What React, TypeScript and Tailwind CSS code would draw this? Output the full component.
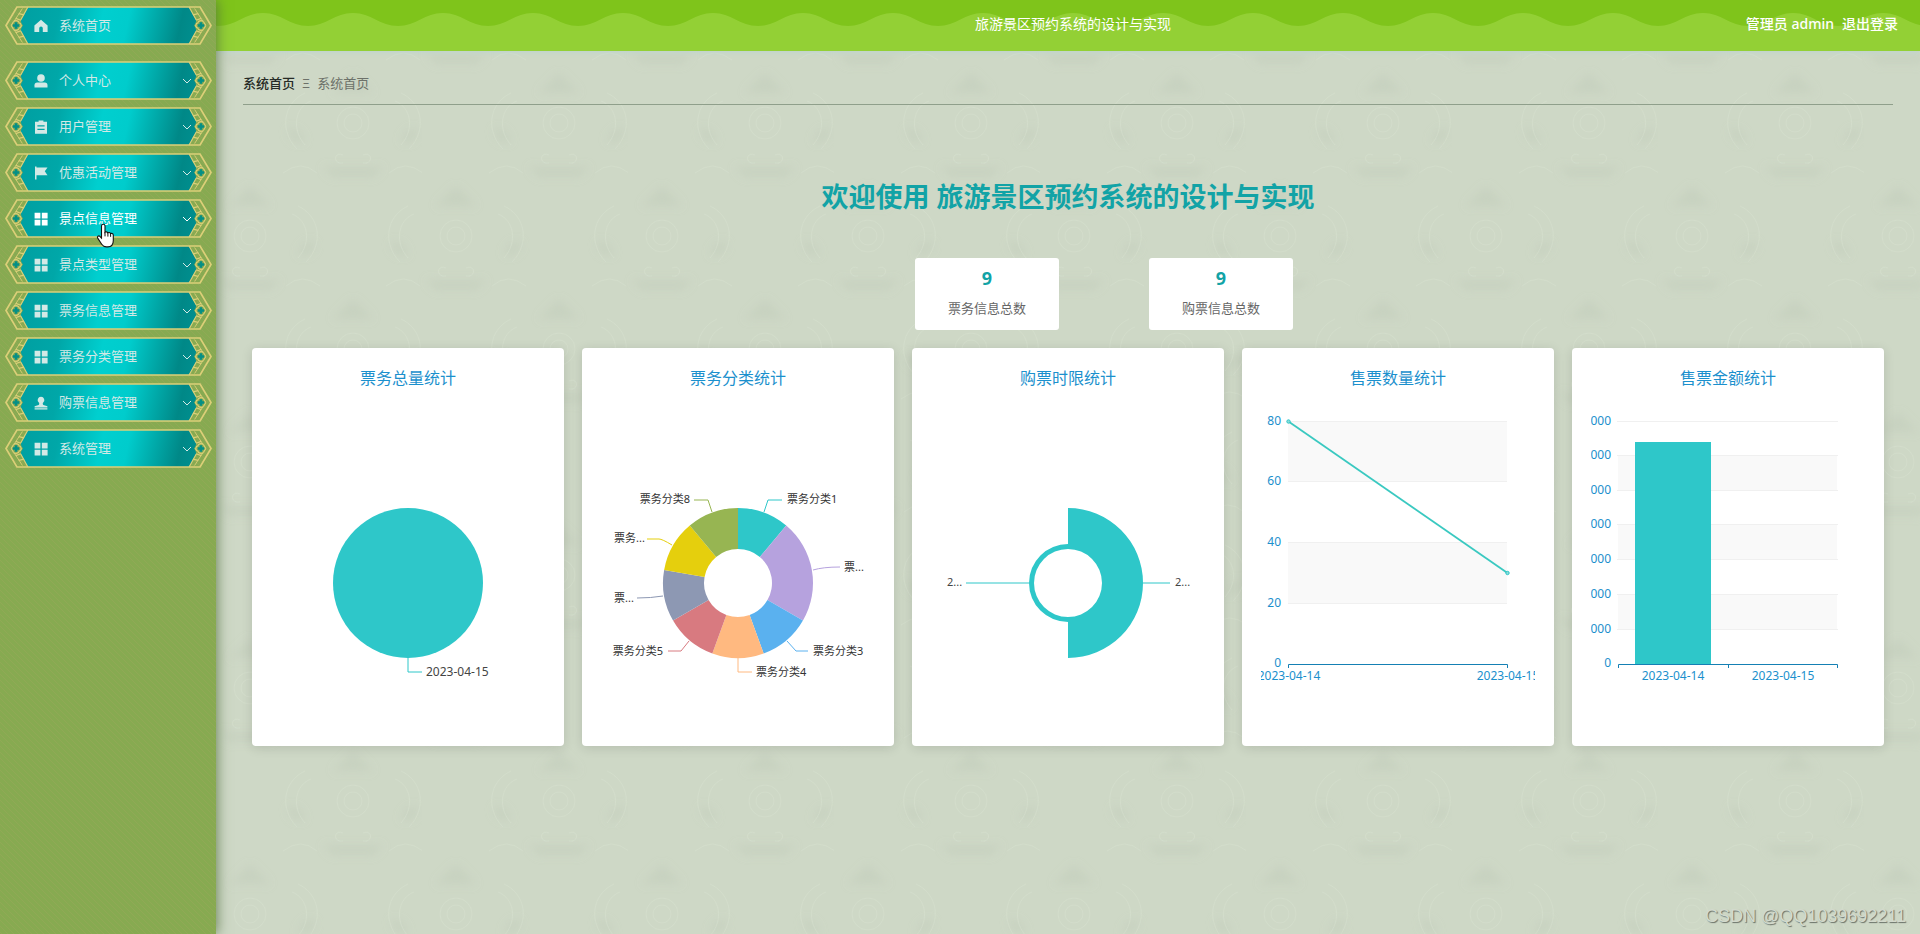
import React from 'react'

const menu = [
    { label: '个人中心', icon: 'user' },
    { label: '用户管理', icon: 'clipboard' },
    { label: '优惠活动管理', icon: 'flag' },
    { label: '景点信息管理', icon: 'grid', hover: true },
    { label: '景点类型管理', icon: 'grid' },
    { label: '票务信息管理', icon: 'grid' },
    { label: '票务分类管理', icon: 'grid' },
    { label: '购票信息管理', icon: 'stamp' },
    { label: '系统管理', icon: 'grid' },
]

const icons: Record<string, React.ReactNode> = {
    home: <path d="M7 0.8 13.6 6.6V13H8.8V9.2a1.8 1.8 0 0 0-3.6 0V13H0.4V6.6z" />,
    user: (
        <>
            <circle cx="7" cy="4" r="3.8" />
            <path d="M0.5 13.4v-2.2Q0.5 8.6 3.2 8.6h7.6q2.7 0 2.7 2.6v2.2z" />
        </>
    ),
    clipboard: (
        <path
            fillRule="evenodd"
            d="M1 1.8h3.6V0.4h4.8v1.4H13V13.8H1zM3.4 5.2v1.3h7.2V5.2zM3.4 8.8v1.3h7.2V8.8z"
        />
    ),
    flag: <path d="M1 0.4h1.5v1h11L10.8 5.3l2.7 3.9h-11v4.4H1z" />,
    grid: <path d="M0.6 0.8h5.8v5.6H0.6zM7.8 0.8h5.8v5.6H7.8zM0.6 7.8h5.8v5.6H0.6zM7.8 7.8h5.8v5.6H7.8z" />,
    stamp: <path d="M7 0.8a3.3 3.3 0 0 1 2.2 5.8c-.6.6-.6 2 .2 2.4l4 1.2v1.3H.6v-1.3l4-1.2c.8-.4.8-1.8.2-2.4A3.3 3.3 0 0 1 7 .8zM.6 12.3h12.8v1.2H.6z" />,
}

// one end of the gold frame, mirrored for the right side
function FrameEnd() {
    return (
        <g fill="none" stroke="#dccf78" strokeWidth="1.2">
            <path d="M23 1 15.8 14M15.8 25 23 38" />
            <path d="M17.5 2.5 9 15.5M9 23.5 17.5 36.5" strokeWidth="0.9" />
            <path d="M6.2 19.5 8.5 15.7M6.2 19.5 8.5 23.3" />
            <path d="M13.8 7.6l5.4 1.2M10.8 12.4l5.2 1.8M13.8 31.4l5.4-1.2M10.8 26.6l5.2-1.8" />
            <path d="M8.4 15.6q2.6-1.8 5-.2q.6 1.8 2.2 2.2q1.4 1.9 0 3.8q-1.6.4-2.2 2.2q-2.4 1.6-5-.2" />
            <path
                d="M9.8 16.3h2.6v1.9h1.9v2.6h-1.9v1.9H9.8v-1.9H7.9v-2.6h1.9z"
                fill="#058f85"
                stroke="none"
            />
        </g>
    )
}

function ButtonFrame() {
    return (
        <svg className="absolute inset-0 h-full w-full" viewBox="0 0 208 39" preserveAspectRatio="none" aria-hidden="true">
            <path
                fill="url(#teal)"
                d="M23 1h162l7.2 13-.8 3.5-1.5 2 1.5 2 .8 3.5L185 38H23l-7.2-13 .8-3.5 1.5-2-1.5-2-.8-3.5z"
            />
            <path d="M1 19.5 12 1h184l11 18.5L196 38H12z" fill="none" stroke="#dccf78" strokeWidth="1.7" />
            <FrameEnd />
            <g transform="translate(208 0) scale(-1 1)">
                <FrameEnd />
            </g>
        </svg>
    )
}

type MenuButtonProps = { label: string; icon: string; hover?: boolean; arrow?: boolean }

function MenuButton({ label, icon, hover, arrow = true }: MenuButtonProps) {
    return (
        <button
            type="button"
            className={`relative flex h-[39px] w-full cursor-pointer items-center pl-[29px] pr-5 text-[13px] ${hover ? 'text-white' : 'text-[#d3e9e6]'}`}
        >
            <ButtonFrame />
            <svg className="relative h-[14px] w-[14px]" viewBox="0 0 14 14" fill="currentColor" aria-hidden="true">
                {icons[icon]}
            </svg>
            <span className="relative ml-[11px]">{label}</span>
            {arrow && (
                <svg className="relative ml-auto h-[6px] w-[10px]" viewBox="0 0 10 6" fill="none" stroke="currentColor" aria-hidden="true">
                    <path d="M1 1l4 4 4-4" />
                </svg>
            )}
        </button>
    )
}

function Sidebar() {
    return (
        <aside className="relative z-20 w-[216px] shrink-0 bg-[#87aa51] pl-[5px] pr-1 pt-[6px] shadow-[1px_0_12px_rgba(80,110,60,0.8)]">
            <svg className="absolute inset-0 h-full w-full" aria-hidden="true">
                <defs>
                    <linearGradient id="teal" gradientUnits="userSpaceOnUse" x1="20" y1="0" x2="190" y2="38">
                        <stop offset="0" stopColor="#00a0a2" />
                        <stop offset="0.2" stopColor="#00a7a8" />
                        <stop offset="0.45" stopColor="#00cfcf" />
                        <stop offset="0.6" stopColor="#00cccc" />
                        <stop offset="0.9" stopColor="#008887" />
                        <stop offset="1" stopColor="#008f8f" />
                    </linearGradient>
                    <pattern id="weave" width="6" height="6" patternUnits="userSpaceOnUse">
                        <path d="M-1 1l8 8M-1-5l8 8M-1 7l8 8" stroke="#9fa95e" strokeOpacity="0.4" strokeWidth="0.9" />
                    </pattern>
                </defs>
                <rect width="100%" height="100%" fill="url(#weave)" />
            </svg>
            <nav>
                <MenuButton label="系统首页" icon="home" arrow={false} />
                <ul className="mt-4 flex flex-col gap-[7px]">
                    {menu.map((item) => (
                        <li key={item.label}>
                            <MenuButton {...item} />
                        </li>
                    ))}
                </ul>
            </nav>
            {/* Pointer */}
            <svg className="absolute left-[96px] top-[223px] h-[25px] w-[19px]" viewBox="0 0 19 25" aria-hidden="true">
                <path
                    d="M7.3 1.2c1.1 0 1.7.8 1.7 1.8v6.2c.5-.6 2.4-.5 2.8.6.7-.6 2.4-.4 2.7.8.9-.5 2.8-.2 2.8 1.6v5.4c0 3.8-2 6.3-5.4 6.3h-1.6c-2.2 0-3.4-.8-4.6-2.6l-4-6.2c-.9-1.5.8-2.9 2.2-1.7l1.6 1.7V3c0-1 .8-1.8 1.8-1.8z"
                    fill="#fff"
                    stroke="#111"
                    strokeWidth="1.1"
                />
                <path d="M9 9v4.4M11.9 10v3.6M14.6 11v2.8" stroke="#111" fill="none" />
            </svg>
        </aside>
    )
}

function Header() {
    return (
        <header className="relative grid h-[51px] grid-cols-[1fr_auto_1fr] items-center bg-[#93d035] pb-[3px] pl-8 pr-[22px] text-sm text-white shadow-[0_1px_5px_#bcd4cf]">
            <svg className="absolute inset-0 h-full w-full" aria-hidden="true">
                <defs>
                    <pattern id="wave" width="90" height="51" x="2" patternUnits="userSpaceOnUse">
                        <path d="M0 0H90V26C72 26 63 13 45 13S18 26 0 26z" fill="#7fc41b" />
                    </pattern>
                </defs>
                <rect width="100%" height="100%" fill="url(#wave)" />
            </svg>
            <div className="relative col-start-2">旅游景区预约系统的设计与实现</div>
            <div className="relative flex justify-end gap-2 font-medium">
                <span>管理员 admin</span>
                <a href="#logout">退出登录</a>
            </div>
        </header>
    )
}

// faint floral wallpaper
function Wallpaper() {
    return (
        <svg className="absolute inset-0 h-full w-full" aria-hidden="true">
            <defs>
                <filter id="soften">
                    <feGaussianBlur stdDeviation="4" />
                </filter>
                <g id="flower">
                    <g fill="#c3cebc" fillOpacity="0.55" filter="url(#soften)">
                        <path d="M0-50c10 10 14 14 20 20H-20c6-6 10-10 20-20z" />
                        <path d="M-66 8c8-6 14 0 18 10-8 4-14 0-18-10zM66 8c-8-6-14 0-18 10 8 4 14 0 18-10z" />
                        <path d="M-30 44h60l-10 10h-40z" />
                    </g>
                    <g fill="none" stroke="#dae3d3" strokeOpacity="0.4" strokeWidth="1">
                        <circle cx="0" cy="0" r="9" />
                        <circle cx="0" cy="0" r="16" />
                        <path d="M-48 22c-14-16-10-38 6-44M48 22c14-16 10-38-6-44" />
                        <path d="M-56 26c-18-18-14-46 8-56M56 26c18-18 14-46-8-56" />
                        <path d="M-10 32c-10-4-10 10 0 8M10 32c10-4 10 10 0 8M-70 50q18-14 34 0M70 50q-18-14-34 0" />
                    </g>
                </g>
                <pattern id="paper" width="206" height="226" patternUnits="userSpaceOnUse">
                    <use href="#flower" x="137" y="123" />
                    <use href="#flower" x="34" y="10" />
                    <use href="#flower" x="240" y="10" />
                    <use href="#flower" x="34" y="236" />
                    <use href="#flower" x="240" y="236" />
                </pattern>
            </defs>
            <rect width="100%" height="100%" fill="url(#paper)" />
        </svg>
    )
}

const CX = 137
const CY = 193

function sector(from: number, to: number, inner: number, outer: number) {
    const at = (deg: number, r: number) => {
        const a = ((deg - 90) * Math.PI) / 180
        return `${(CX + r * Math.cos(a)).toFixed(2)} ${(CY + r * Math.sin(a)).toFixed(2)}`
    }
    const large = to - from > 180 ? 1 : 0
    return `M${at(from, outer)}A${outer} ${outer} 0 ${large} 1 ${at(to, outer)}L${at(to, inner)}A${inner} ${inner} 0 ${large} 0 ${at(from, inner)}z`
}

function ChartSvg({ label, children }: { label: string; children: React.ReactNode }) {
    return (
        <svg className="w-full" viewBox="0 0 274 338" role="img" aria-label={label}>
            {children}
        </svg>
    )
}

function TotalChart() {
    return (
        <ChartSvg label="票务总量统计">
            <circle cx={CX} cy={CY} r="75" fill="#2ec7c9" />
            <path d="M137 268v14h14" fill="none" stroke="#2ec7c9" />
            <text x="155" y="286" fontSize="12" fill="#444">2023-04-15</text>
        </ChartSvg>
    )
}

const slices = [
    { from: 0, to: 40, color: '#2ec7c9', line: 'M163 122L167 110H181', text: '票务分类1', x: 186, y: 113 },
    { from: 40, to: 120, color: '#b6a2de', line: 'M212 180Q222 177 239 177', text: '票...', x: 243, y: 181 },
    { from: 120, to: 160, color: '#5ab1ef', line: 'M186 251L195 261H207', text: '票务分类3', x: 212, y: 265 },
    { from: 160, to: 200, color: '#ffb980', line: 'M137 268V282H151', text: '票务分类4', x: 155, y: 286 },
    { from: 200, to: 240, color: '#d87a80', line: 'M88 251L80 261H67', text: '票务分类5', x: 62, y: 265, end: true },
    { from: 240, to: 280, color: '#8d98b3', line: 'M62 206Q50 208 36 208', text: '票...', x: 13, y: 212 },
    { from: 280, to: 320, color: '#e5cf0d', line: 'M71 155Q61 149 58 149H46', text: '票务...', x: 13, y: 152 },
    { from: 320, to: 360, color: '#97b552', line: 'M111 122L107 110H93', text: '票务分类8', x: 89, y: 113, end: true },
]

function CategoryChart() {
    return (
        <ChartSvg label="票务分类统计">
            {slices.map((s) => (
                <g key={s.from}>
                    <path d={sector(s.from, s.to, 34, 75)} fill={s.color} />
                    <path d={s.line} fill="none" stroke={s.color} />
                    <text x={s.x} y={s.y} fontSize="11" fill="#333" textAnchor={s.end ? 'end' : 'start'}>{s.text}</text>
                </g>
            ))}
        </ChartSvg>
    )
}

function LimitChart() {
    return (
        <ChartSvg label="购票时限统计">
            <path d={sector(0, 180, 34, 75)} fill="#2ec7c9" />
            <path d={sector(180, 360, 34, 39)} fill="#2ec7c9" />
            <path d="M35 193H98M212 193H239" stroke="#2ec7c9" />
            <text x="16" y="196" fontSize="11" fill="#444">2...</text>
            <text x="244" y="196" fontSize="11" fill="#444">2...</text>
        </ChartSvg>
    )
}

function CountChart() {
    const ticks = [
        { v: 80, y: 31.5 },
        { v: 60, y: 91.5 },
        { v: 40, y: 152.5 },
        { v: 20, y: 213.5 },
        { v: 0, y: 274 },
    ]
    return (
        <ChartSvg label="售票数量统计">
            <path d="M27 31H246V91H27zM27 152H246V213H27z" fill="#f9f9f9" />
            {ticks.map((t) => (
                <g key={t.v}>
                    {t.v > 0 && <path d={`M27 ${t.y}H246`} stroke="#f0f0f0" />}
                    <text x="20" y={t.y + 3} fontSize="12" fill="#1b90cd" textAnchor="end">{t.v}</text>
                </g>
            ))}
            <path d="M27.5 278V274.5H246.5V278" fill="none" stroke="#1580b4" />
            <path d="M27.5 31.5L246.5 183" stroke="#3ac9c1" strokeWidth="1.8" />
            <circle cx="27.5" cy="31.5" r="1.7" fill="#8fdcd8" stroke="#2ec7c9" />
            <circle cx="246.5" cy="183" r="1.7" fill="#8fdcd8" stroke="#2ec7c9" />
            <text x="28" y="290" fontSize="12" fill="#1b90cd" textAnchor="middle">2023-04-14</text>
            <text x="247" y="290" fontSize="12" fill="#1b90cd" textAnchor="middle">2023-04-15</text>
        </ChartSvg>
    )
}

function AmountChart() {
    const rows = [31.5, 65.5, 100.5, 134.5, 169.5, 204.5, 239.5]
    return (
        <ChartSvg label="售票金额统计">
            <path d="M27 65H246V100H27zM27 134H246V170H27zM27 204H246V239H27z" fill="#f9f9f9" />
            {rows.map((y) => (
                <g key={y}>
                    <path d={`M26 ${y}H247`} stroke="#f0f0f0" />
                    <text x="20" y={y + 3} fontSize="12" fill="#1b90cd" textAnchor="end">000</text>
                </g>
            ))}
            <text x="20" y="277" fontSize="12" fill="#1b90cd" textAnchor="end">0</text>
            <rect x="44" y="52" width="76" height="222" fill="#2ec7c9" />
            <path d="M27.5 278V274.5H246.5V278M137.5 274V278" fill="none" stroke="#1580b4" />
            <text x="82" y="290" fontSize="12" fill="#1b90cd" textAnchor="middle">2023-04-14</text>
            <text x="192" y="290" fontSize="12" fill="#1b90cd" textAnchor="middle">2023-04-15</text>
        </ChartSvg>
    )
}

const charts = [
    { title: '票务总量统计', Chart: TotalChart },
    { title: '票务分类统计', Chart: CategoryChart },
    { title: '购票时限统计', Chart: LimitChart },
    { title: '售票数量统计', Chart: CountChart },
    { title: '售票金额统计', Chart: AmountChart },
]

const stats = [
    { label: '票务信息总数', value: 9 },
    { label: '购票信息总数', value: 9 },
]

export default function App() {
    return (
        <div className="flex min-h-screen bg-[#ced8c6] font-['Noto_Sans','Noto_Sans_CJK_SC',sans-serif]">
            <Sidebar />
            <div className="relative flex min-w-0 flex-1 flex-col">
                <Wallpaper />
                <Header />
                <main className="relative flex-1 px-[27px]">
                    <div className="flex h-[54px] items-center gap-[7px] border-b border-[#8f9f8b] pt-3 text-[13px] text-[#6c7169]">
                        <a href="#home" className="font-medium text-[#262b26]">系统首页</a>
                        <span>Ξ</span>
                        <span>系统首页</span>
                    </div>
                    <h1 className="mt-[72px] text-center text-[27px] font-bold leading-10 text-[#12a3a6]">
                        欢迎使用 旅游景区预约系统的设计与实现
                    </h1>
                    <div className="mt-[41px] flex justify-center gap-[90px] pl-[72px]">
                        {stats.map((s) => (
                            <div key={s.label} className="h-[72px] w-36 rounded-[3px] bg-white pt-2 text-center">
                                <div className="text-lg font-bold leading-6 text-[#12a3a6]">{s.value}</div>
                                <div className="mt-2 text-[13px] leading-5 text-[#666]">{s.label}</div>
                            </div>
                        ))}
                    </div>
                    <div className="mt-[18px] grid grid-cols-5 gap-[18px] px-[9px]">
                        {charts.map(({ title, Chart }) => (
                            <section key={title} className="rounded bg-white px-[19px] py-[18px] shadow-[0_2px_12px_rgba(0,0,0,0.12)]">
                                <h2 className="text-center text-base leading-6 text-[#1b90cd]">{title}</h2>
                                <Chart />
                            </section>
                        ))}
                    </div>
                </main>
                <div className="absolute bottom-[6px] right-[14px] font-['Liberation_Sans',sans-serif] text-lg leading-6 text-[#d3dacd] [text-shadow:1px_1px_1px_#697168]">
                    CSDN @QQ1039692211
                </div>
            </div>
        </div>
    )
}
